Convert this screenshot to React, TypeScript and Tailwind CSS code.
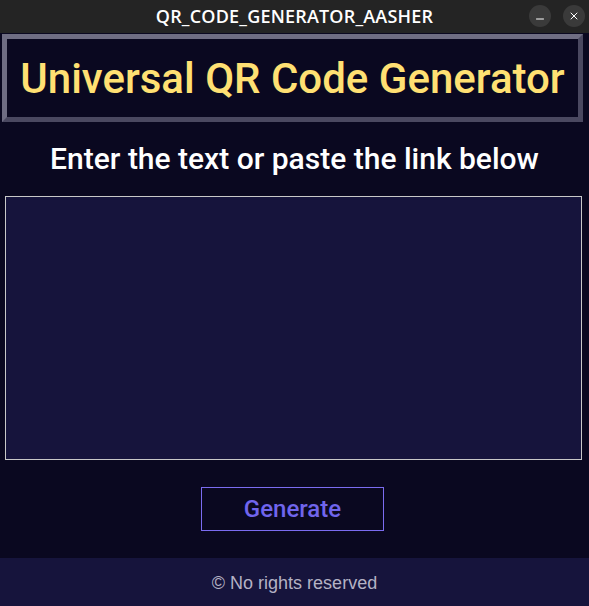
import { X, Minus } from "lucide-react";

export default function App() {
  return (
    <div className="w-[589px] h-[606px] flex flex-col bg-[#0a0820] overflow-hidden">
      {/* Window title bar */}
      <div className="h-[33px] shrink-0 bg-[#242424] relative flex items-center justify-center">
        <span className="text-white text-[18px] font-semibold tracking-[0.2px] font-['Open_Sans',sans-serif]">
          QR_CODE_GENERATOR_AASHER
        </span>
        <div className="absolute right-[4px] top-[5px] flex gap-[12px]">
          <span className="w-[22px] h-[22px] rounded-full bg-[#3a3a3a] flex items-center justify-center text-white">
            <Minus size={12} strokeWidth={2} className="mt-[6px]" />
          </span>
          <span className="w-[22px] h-[22px] rounded-full bg-[#3a3a3a] flex items-center justify-center text-white">
            <X size={12} strokeWidth={2} />
          </span>
        </div>
      </div>

      {/* Heading box */}
      <div className="mt-[1px] ml-[2px] w-[581px] h-[88px] border-[5px] border-t-[#6f6d83] border-l-[#6f6d83] border-r-[#4a4860] border-b-[#4a4860] bg-[#0a0820] flex items-center justify-center">
        <h1 className="text-[#ffe073] text-[42px] font-medium font-['Roboto',sans-serif] leading-none mt-[1px] whitespace-nowrap">
          Universal QR Code Generator
        </h1>
      </div>

      {/* Prompt */}
      <p className="mt-[20px] text-center text-white text-[30px] font-medium font-['Roboto',sans-serif] leading-[34px] whitespace-nowrap">
        Enter the text or paste the link below
      </p>

      {/* Input */}
      <textarea className="mt-[20px] ml-[5px] w-[577px] h-[264px] shrink-0 bg-[#16143c] border border-[#c8c8c8] outline-none resize-none text-white p-2 font-['Roboto',sans-serif]" />

      {/* Action */}
      <div className="flex mt-[27px] pl-[201px]">
        <button className="w-[183px] h-[44px] border border-[#7b6cf0] bg-transparent text-[#7065ec] text-[24px] font-medium font-['Roboto',sans-serif]">
          Generate
        </button>
      </div>

      {/* Footer */}
      <footer className="mt-auto h-[48px] bg-[#16143c] flex items-center justify-center">
        <span className="text-[#b4b2c4] text-[18px] font-['Liberation_Sans',Arial,sans-serif] mt-[2px]">
          © No rights reserved
        </span>
      </footer>
    </div>
  );
}
